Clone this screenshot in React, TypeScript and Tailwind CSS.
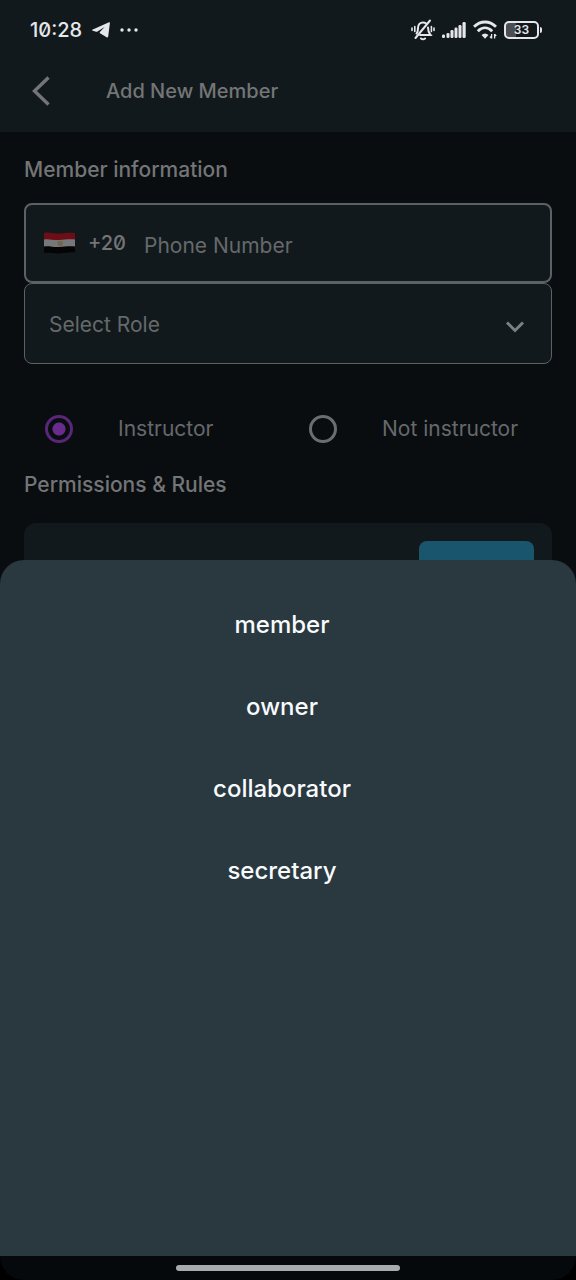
import { useState } from "react";

const ROLES = ["member", "owner", "collaborator", "secretary"];

function TelegramIcon() {
  return (
    <svg className="w-[18px] h-4" viewBox="0 0 18 16" fill="currentColor" aria-hidden="true">
      <path d="M17 .3c.6-.3 1 0 .9.6l-1.7 13.6c-.1.9-.9 1.2-1.6.8L8 11.2c-.5-.4-.5-.8-.1-1.2l4.7-4.9-7.1 4.5c-.4.2-.8.2-1.3.1L.8 8.8c-.9-.3-.9-.9 0-1.3z" />
    </svg>
  );
}

function MutedBellIcon() {
  return (
    <svg
      className="w-6 h-[22px]"
      viewBox="0 0 24 22"
      fill="none"
      stroke="currentColor"
      strokeWidth="2"
      strokeLinecap="round"
      aria-hidden="true"
    >
      <path d="M5.5 14.5C6.8 13.300 7 12 7 9c0-3.400 2-5.600 5-5.600 1.100 0 2.100.3 2.900.9M17 8.500c0 3.500.6 5.300 2.500 7.500H9" />
      <path d="M19 1.500 4.500 19" />
      <path d="M10 19.500c1.200 1 2.800 1 4 0" />
      <path d="M3.800 7.500v5M1 9v2.500M20.400 7.500v5M23 9v2.500" strokeWidth="1.600" />
    </svg>
  );
}

function SignalIcon() {
  return (
    <svg className="w-6 h-4" viewBox="0 0 24 16" fill="currentColor" aria-hidden="true">
      <rect x="0" y="12.5" width="3" height="3.5" rx="1.2" />
      <rect x="4.5" y="11" width="3" height="5" rx="1.2" />
      <rect x="8.5" y="8" width="3" height="8" rx="1.2" />
      <rect x="12.5" y="5.5" width="3" height="10.5" rx="1.2" />
      <rect x="16.5" y="3" width="3" height="13" rx="1.2" />
      <rect x="20.5" y="0" width="3.2" height="16" rx="1.2" />
    </svg>
  );
}

function WifiIcon() {
  return (
    <svg className="w-6 h-5" viewBox="0 0 24 20" fill="none" stroke="currentColor" aria-hidden="true">
      <path d="M1 6.800c6.500-6.400 15.500-6.400 22 0" strokeWidth="2.800" />
      <path d="M4.800 11.200c4.400-4.400 10-4.400 14.400 0" strokeWidth="2.800" />
      <path d="M8.500 15c2.200-2 4.800-2 7 0L12 18.800z" fill="currentColor" stroke="none" />
      <path d="M18.600 14v4.500M21.600 14v4.500M17 16.500l1.600 1.800M23.200 16l-1.600-1.800" strokeWidth="1.300" />
    </svg>
  );
}

function EgyptFlag() {
  return (
    <svg className="w-8 h-[22px] shrink-0" viewBox="0 0 32 22" role="img" aria-label="Egypt">
      <path d="M0 1c5-1.500 9 .8 15 .4C22 1 26 .2 31 1v7H0z" fill="#6d0d17" />
      <path d="M0 7.500c5-1 9 .9 15 .5 6-.4 11-1.200 16-.5v7.500H0z" fill="#77787a" />
      <path d="M0 14.500c5-1 9 .8 15 .4 6-.4 11-1.200 16-.4v6c-5-.9-9 .4-15 .9-6 .3-11-1.300-16-.4z" fill="#050506" />
      <path d="M13.500 8.500l2 1 1-1 1 1 1.500-1v4l-1.500 1.500h-2.500l-1.500-1.500z" fill="#75664a" />
    </svg>
  );
}

function StatusBar() {
  return (
    <div className="flex items-center justify-between h-14 pl-[30px] pr-[34px] pt-[3px] text-gray-200">
      <div className="flex items-center gap-2.5">
        <span className="text-xl font-medium slashed-zero">10:28</span>
        <TelegramIcon />
        <svg className="w-[18px] h-1" viewBox="0 0 18 4" fill="currentColor" aria-hidden="true">
          <circle cx="2" cy="2" r="1.7" />
          <circle cx="9" cy="2" r="1.7" />
          <circle cx="16" cy="2" r="1.7" />
        </svg>
      </div>
      <div className="flex items-center gap-[7px]">
        <MutedBellIcon />
        <SignalIcon />
        <WifiIcon />
        <div className="flex items-center gap-px">
          <span className="flex items-center justify-center w-[35px] h-[18px] rounded-[5px] border-2 border-gray-200 bg-linear-to-r from-[#4b4f52] from-33% to-transparent to-33% text-xs font-semibold">
            33
          </span>
          <span className="w-0.5 h-1.5 rounded-r bg-gray-200" />
        </div>
      </div>
    </div>
  );
}

type RadioProps = {
  label: string;
  checked: boolean;
  onChange: () => void;
};

function RadioOption({ label, checked, onChange }: RadioProps) {
  return (
    <label className="flex items-center gap-[45px] pl-[21px] text-[21px] leading-7 whitespace-nowrap">
      <input
        type="radio"
        name="instructor"
        checked={checked}
        onChange={onChange}
        className="appearance-none shrink-0 w-7 h-7 rounded-full border-3 border-[#6b6d6f] checked:border-[#59267a] checked:bg-[radial-gradient(circle,#692b8c_6px,transparent_7px)]"
      />
      {label}
    </label>
  );
}

export default function App() {
  const [role, setRole] = useState("");
  const [instructor, setInstructor] = useState(true);

  return (
    <div className="min-h-screen bg-[#0a0d10] text-[#737577] font-['Inter',sans-serif]">
      <header className="bg-[#12191c]">
        <StatusBar />
        <div className="flex items-center h-19 pb-1.5 pl-8 gap-14">
          <button type="button" aria-label="Back">
            <svg
              className="w-[18px] h-8"
              viewBox="0 0 18 32"
              fill="none"
              stroke="currentColor"
              strokeWidth="3.4"
              aria-hidden="true"
            >
              <path d="M16.5 2.500 2.500 16l14 13.500" />
            </svg>
          </button>
          <h1 className="text-xl font-medium">Add New Member</h1>
        </div>
      </header>

      <main className="px-6 pt-6">
        <h2 className="text-[21px] leading-7 font-medium">Member information</h2>

        <div className="flex items-center mt-[19px] h-20 px-[18px] border-2 border-[#5c6163] rounded-lg bg-[#12191c]">
          <EgyptFlag />
          <span className="ml-3 text-xl font-medium slashed-zero">+20</span>
          <input
            type="tel"
            aria-label="Phone Number"
            placeholder="Phone Number"
            className="ml-[18px] pt-1.5 flex-1 min-w-0 bg-transparent outline-none text-[21px] placeholder:text-[#66696b]"
          />
        </div>

        <div className="grid items-center rounded-lg border border-[#5c6163] bg-[#12191c]">
          <select
            aria-label="Select Role"
            value={role}
            onChange={(e) => setRole(e.target.value)}
            className="col-start-1 row-start-1 appearance-none w-full h-[79px] px-6 pt-0.5 bg-transparent text-[21px] text-[#66696b]"
          >
            <option value="">Select Role</option>
            {ROLES.map((r) => (
              <option key={r} value={r}>
                {r}
              </option>
            ))}
          </select>
          <svg
            className="col-start-1 row-start-1 justify-self-end mr-[26px] mt-1.5 w-5 h-3 pointer-events-none"
            viewBox="0 0 20 12"
            fill="none"
            stroke="#7c8082"
            strokeWidth="3"
            aria-hidden="true"
          >
            <path d="M2 1.500l8 8 8-8" />
          </svg>
        </div>

        <div className="grid grid-cols-2 mt-[51px] text-[#66696b]">
          <RadioOption label="Instructor" checked={instructor} onChange={() => setInstructor(true)} />
          <RadioOption label="Not instructor" checked={!instructor} onChange={() => setInstructor(false)} />
        </div>

        <h2 className="mt-7 text-[21px] leading-7 font-medium">Permissions &amp; Rules</h2>
        <div className="flex justify-end mt-6 h-32 p-[18px] rounded-xl bg-[#12191c]">
          <div className="w-[115px] h-12 rounded-lg bg-[#19566e]" />
        </div>
      </main>

      {/* role picker sheet */}
      <div className="fixed inset-0 flex flex-col justify-end">
        <div className="flex flex-col h-9/16">
          <div className="flex-1 pt-6 pr-3 rounded-t-3xl bg-[#2a383f]">
            {ROLES.map((r) => (
              <button
                key={r}
                type="button"
                onClick={() => setRole(r)}
                className="block w-full h-[82px] text-2xl font-medium text-slate-50"
              >
                {r}
              </button>
            ))}
          </div>
          <div className="bg-black">
            <div className="flex items-center justify-center h-6 rounded-b-3xl bg-[#05090c]">
              <span className="w-56 h-1.5 rounded-full bg-[#a8abac]" />
            </div>
          </div>
        </div>
      </div>
    </div>
  );
}
